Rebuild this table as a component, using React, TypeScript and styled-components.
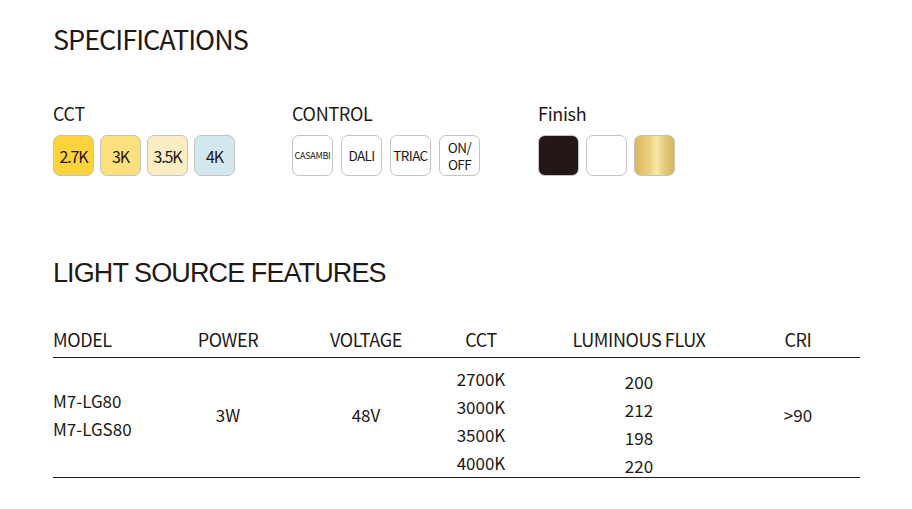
import React from 'react';
import styled, { createGlobalStyle } from 'styled-components';

const GlobalStyle = createGlobalStyle`
  html, body {
    margin: 0;
    padding: 0;
    background: #ffffff;
  }
  body {
    font-family: 'Noto Sans CJK SC', 'Noto Sans', sans-serif;
    color: #231815;
  }
`;

const cctOptions = [
  { label: '2.7K', color: '#fdd33c' },
  { label: '3K', color: '#fde07c' },
  { label: '3.5K', color: '#faedc4' },
  { label: '4K', color: '#d3e7ef' },
];

const controlOptions = ['CASAMBI', 'DALI', 'TRIAC', 'ON/\nOFF'];

const finishOptions = [
  'linear-gradient(#231815, #231815)',
  'linear-gradient(#ffffff, #ffffff)',
  'linear-gradient(90deg, #d9b75c 0%, #e9cf7f 35%, #f9e9a6 55%, #e6cb79 75%, #d7b45a 100%)',
];

const models = ['M7-LG80', 'M7-LGS80'];
const ccts = ['2700K', '3000K', '3500K', '4000K'];
const fluxes = ['200', '212', '198', '220'];

const App = () => {
  return (
    <>
      <GlobalStyle />
      <Page>
        <Title>SPECIFICATIONS</Title>

        <SpecRow>
          <SpecGroup>
            <GroupLabel>CCT</GroupLabel>
            <Swatches gap={6}>
              {cctOptions.map((o) => (
                <Swatch key={o.label} fill={o.color}>
                  <CctText>{o.label}</CctText>
                </Swatch>
              ))}
            </Swatches>
          </SpecGroup>

          <SpecGroup>
            <GroupLabel>CONTROL</GroupLabel>
            <Swatches gap={8}>
              {controlOptions.map((c) => (
                <Swatch key={c} fill="#ffffff">
                  <ControlText small={c === 'CASAMBI'}>{c}</ControlText>
                </Swatch>
              ))}
            </Swatches>
          </SpecGroup>

          <SpecGroup>
            <GroupLabel>Finish</GroupLabel>
            <Swatches gap={7}>
              {finishOptions.map((f, i) => (
                <Swatch key={i} fill={f} />
              ))}
            </Swatches>
          </SpecGroup>
        </SpecRow>

        <FeatureTitle>LIGHT SOURCE FEATURES</FeatureTitle>

        <Table>
          <HeadRow>
            <HeadCell align="left">MODEL</HeadCell>
            <HeadCell>POWER</HeadCell>
            <HeadCell>VOLTAGE</HeadCell>
            <HeadCell>CCT</HeadCell>
            <HeadCell>LUMINOUS FLUX</HeadCell>
            <HeadCell>CRI</HeadCell>
          </HeadRow>
          <BodyRow>
            <BodyCell align="left">
              {models.map((m) => (
                <Line key={m}>{m}</Line>
              ))}
            </BodyCell>
            <BodyCell>
              <Line>3W</Line>
            </BodyCell>
            <BodyCell>
              <Line>48V</Line>
            </BodyCell>
            <ListCell>
              {ccts.map((c) => (
                <Line key={c}>{c}</Line>
              ))}
            </ListCell>
            <ListCell shift={3}>
              {fluxes.map((f) => (
                <Line key={f}>{f}</Line>
              ))}
            </ListCell>
            <BodyCell>
              <Line>&gt;90</Line>
            </BodyCell>
          </BodyRow>
        </Table>
      </Page>
    </>
  );
};

export default App;

const Page = styled.div`
  width: 912px;
  height: 509px;
  box-sizing: border-box;
  padding: 23px 52px 0 53px;
  overflow: hidden;
`;

const Title = styled.h1`
  margin: 0;
  font-family: 'Noto Sans CJK SC', sans-serif;
  font-weight: 400;
  font-size: 27px;
  line-height: 1.2;
  letter-spacing: -1px;
  color: #231815;
`;

const SpecRow = styled.div`
  display: grid;
  grid-template-columns: 239px 246px auto;
  margin-top: 46px;
`;

const SpecGroup = styled.div`
  display: flex;
  flex-direction: column;
`;

const GroupLabel = styled.div`
  font-size: 18px;
  line-height: 24px;
  letter-spacing: -0.3px;
  margin-bottom: 10px;
`;

const Swatches = styled.div<{ gap: number }>`
  display: flex;
  gap: ${({ gap }) => gap}px;
`;

const Swatch = styled.div<{ fill: string }>`
  width: 41px;
  height: 41px;
  box-sizing: border-box;
  border: 1.5px solid #c4c4c4;
  border-radius: 7px;
  background: ${({ fill }) => fill};
  display: flex;
  align-items: center;
  justify-content: center;
  text-align: center;
`;

const CctText = styled.span`
  font-size: 16px;
  letter-spacing: -1.1px;
  line-height: 1;
`;

const ControlText = styled.span<{ small?: boolean }>`
  font-size: ${({ small }) => (small ? '9px' : '13.5px')};
  letter-spacing: ${({ small }) => (small ? '-0.3px' : '-0.6px')};
  line-height: 17px;
  white-space: pre-line;
`;

const FeatureTitle = styled.h2`
  margin: 81px 0 0;
  font-family: 'Liberation Sans', Arial, sans-serif;
  font-weight: 400;
  font-size: 27px;
  line-height: 1.2;
  letter-spacing: -0.9px;
  color: #231815;
`;

const Table = styled.div`
  width: 807px;
  margin-top: 37px;
  border-bottom: 1.5px solid #231815;
`;

const columns = '107px 136px 140px 90px 226px 92px';

const HeadRow = styled.div`
  display: grid;
  grid-template-columns: ${columns};
  padding-bottom: 6px;
  border-bottom: 1.5px solid #231815;
`;

const HeadCell = styled.div<{ align?: string }>`
  font-size: 18px;
  line-height: 24px;
  letter-spacing: -0.4px;
  text-align: ${({ align }) => align || 'center'};
`;

const BodyRow = styled.div`
  display: grid;
  grid-template-columns: ${columns};
  padding: 7px 0 0;
  height: 119px;
  box-sizing: border-box;
`;

const BodyCell = styled.div<{ align?: string }>`
  display: flex;
  flex-direction: column;
  justify-content: center;
  align-items: ${({ align }) => (align === 'left' ? 'flex-start' : 'center')};
  margin-top: -7px;
  padding-bottom: 8px;
`;

const ListCell = styled.div<{ shift?: number }>`
  display: flex;
  flex-direction: column;
  align-items: center;
  padding-top: ${({ shift }) => shift || 0}px;
`;

const Line = styled.div`
  font-size: 17px;
  line-height: 28px;
  letter-spacing: 0;
`;
